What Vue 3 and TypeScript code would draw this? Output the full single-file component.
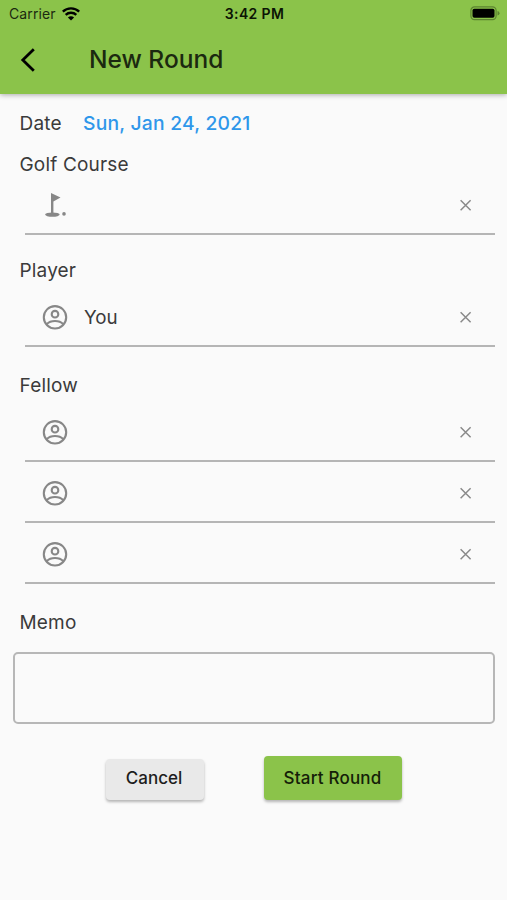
<script setup lang="ts">
import { ref } from 'vue'

interface Group {
  label: string
  kind: 'course' | 'person'
  values: string[]
}

const date = ref('Sun, Jan 24, 2021')
const groups = ref<Group[]>([
  { label: 'Golf Course', kind: 'course', values: [''] },
  { label: 'Player', kind: 'person', values: ['You'] },
  { label: 'Fellow', kind: 'person', values: ['', '', ''] },
])

function clear(group: Group, index: number): void {
  group.values[index] = ''
}
</script>

<template>
  <div class="screen">
    <header class="header">
      <div class="status">
        <div class="carrier">
          <span class="carrier-name">Carrier</span>
          <svg class="wifi" width="18" height="14" viewBox="0 0 18 14">
            <path d="M0.8 4.6C5.3 0.3 12.7 0.3 17.2 4.6" />
            <path d="M3.7 7.8C6.6 5 11.4 5 14.3 7.8" />
            <path class="solid" d="M9 13.6L5.9 10.4C7.6 8.9 10.4 8.9 12.1 10.4Z" />
          </svg>
        </div>
        <span class="clock">3:42 PM</span>
        <svg class="battery" width="31" height="15" viewBox="0 0 31 15">
          <rect class="case" x="0.9" y="0.9" width="25.2" height="12.8" rx="3.6" />
          <rect x="2.5" y="2.8" width="22" height="9" rx="1.8" />
          <path class="cap" d="M27.5 5Q29.5 5.5 29.5 7.3Q29.5 9.1 27.5 9.6Z" />
        </svg>
      </div>
      <div class="bar">
        <svg class="back" width="16" height="26" viewBox="0 0 16 26">
          <path d="M13.8 2.2L2.8 13L13.8 23.8" />
        </svg>
        <h1 class="title">New Round</h1>
      </div>
    </header>

    <main class="form">
      <div class="date-row">
        <span class="label label-date">Date</span>
        <span class="date">{{ date }}</span>
      </div>

      <section v-for="group in groups" :key="group.label" class="group" :class="group.label.split(' ')[0].toLowerCase()">
        <h2 class="label">{{ group.label }}</h2>
        <div class="fields">
          <div v-for="(value, i) in group.values" :key="i" class="field">
            <svg v-if="group.kind === 'course'" class="icon" width="30" height="30" viewBox="0 0 30 30">
              <path d="M11 3L20.5 7.4L13.4 11.4V24H11Z" />
              <ellipse cx="12.4" cy="24.6" rx="7.3" ry="2.2" />
              <circle cx="24" cy="23.9" r="1.8" />
            </svg>
            <svg v-else class="icon person" width="30" height="30" viewBox="0 0 30 30">
              <circle cx="15" cy="15.3" r="11.2" />
              <circle cx="15" cy="12.2" r="3.3" />
              <path d="M6.8 22.2C10.6 18 19.4 18 23.2 22.2" />
            </svg>
            <span class="value">{{ value }}</span>
            <svg class="clear" width="12" height="12" viewBox="0 0 12 12" @click="clear(group, i)">
              <path d="M0.6 1.3L10.6 11.3M10.6 1.3L0.6 11.3" />
            </svg>
          </div>
        </div>
      </section>

      <h2 class="label memo-label">Memo</h2>
      <div class="memo"></div>

      <div class="actions">
        <button class="btn cancel" type="button">Cancel</button>
        <button class="btn start" type="button">Start Round</button>
      </div>
    </main>
  </div>
</template>

<style>
body {
  background: #fafafa;
}
</style>

<style scoped>
.screen {
  box-sizing: border-box;
  width: 507px;
  height: 900px;
  overflow: hidden;
  background: #fafafa;
  color: #3b3b3b;
  font-family: Inter, "Liberation Sans", sans-serif;
}
.header {
  height: 94px;
  background: #8bc34a;
  box-shadow: 0 1px 5px rgba(0, 0, 0, 0.32);
  color: #1b2910;
}
.status {
  display: grid;
  grid-template-columns: 1fr auto 1fr;
  align-items: center;
  height: 27px;
  padding: 0 7px 0 9px;
}
.carrier {
  display: flex;
  align-items: center;
  gap: 6px;
}
.carrier-name {
  font-size: 14px;
  line-height: 20px;
  letter-spacing: 0.1px;
}
.wifi path {
  fill: none;
  stroke: #000;
  stroke-width: 2.4;
}
.wifi .solid {
  fill: #000;
  stroke: none;
}
.clock {
  font-size: 14px;
  font-weight: 600;
  line-height: 20px;
  letter-spacing: 0.35px;
  color: #0b1404;
}
.battery {
  justify-self: end;
  margin-right: -1px;
}
.battery .case {
  fill: none;
  stroke: #5c8430;
  stroke-width: 1.2;
}
.battery .cap {
  fill: #5c8430;
}
.bar {
  display: flex;
  align-items: center;
  height: 66px;
  padding-left: 20px;
}
.back {
  fill: none;
  stroke: #000;
  stroke-width: 2.8;
}
.title {
  margin: 0 0 0 53px;
  padding-bottom: 2px;
  font-size: 24.5px;
  font-weight: 450;
  line-height: 32px;
}
.form {
  padding: 17px 12px 0 13px;
}
.date-row {
  display: flex;
  align-items: center;
  height: 24px;
}
.label {
  margin: 0 0 -2px;
  padding-left: 6.5px;
  font-size: 19px;
  font-weight: 400;
  line-height: 26px;
  letter-spacing: 0.17px;
}
.label-date {
  width: 63.5px;
}
.date {
  font-size: 19.3px;
  font-weight: 500;
  line-height: 24px;
  letter-spacing: 0.22px;
  color: #2f97ea;
}
.golf {
  padding-top: 17px;
}
.golf .fields {
  margin-top: -2px;
}
.player {
  padding-top: 23px;
}
.player .fields {
  padding-top: 4px;
}
.fellow {
  padding-top: 26px;
}
.fellow .fields {
  padding-top: 4px;
}
.golf .label {
  margin-bottom: 0;
}
.golf .fields {
  margin-top: -4px;
}
.field {
  display: flex;
  align-items: center;
  box-sizing: border-box;
  height: 61px;
  margin-left: 12px;
  padding: 3px 23.5px 0 14.5px;
  border-bottom: 2px solid #b5b5b5;
}
.icon {
  fill: #878787;
}
.person {
  fill: none;
  stroke: #878787;
  stroke-width: 2.1;
}
.value {
  flex: 1;
  padding-top: 2px;
  padding-left: 14.5px;
  font-size: 18.8px;
  line-height: 24px;
}
.clear {
  fill: none;
  stroke: #8a8a8a;
  stroke-width: 1.5;
}
.memo-label {
  padding-top: 26px;
}
.memo {
  box-sizing: border-box;
  height: 72px;
  padding: 0;
  margin-top: 18px;
  border: 2px solid #b7b7b7;
  border-radius: 5px;
}
.memo-label {
  margin-bottom: -2px;
}
.actions {
  display: flex;
  align-items: flex-end;
  gap: 60px;
  padding: 32px 0 0 93px;
}
.btn {
  padding: 0;
  border: 0;
  border-radius: 4px;
  font-family: inherit;
  font-size: 17px;
  font-weight: 500;
  letter-spacing: 0.2px;
  color: #1d1d1d;
  box-shadow: 0 2px 3px rgba(0, 0, 0, 0.28);
}
.cancel {
  width: 98px;
  height: 41px;
  padding: 0 2px 4px 0;
  letter-spacing: 0;
  background: #e9e9e9;
}
.start {
  width: 138px;
  height: 44px;
  padding-right: 1px;
  background: #8bc34a;
  color: #142008;
}
</style>
